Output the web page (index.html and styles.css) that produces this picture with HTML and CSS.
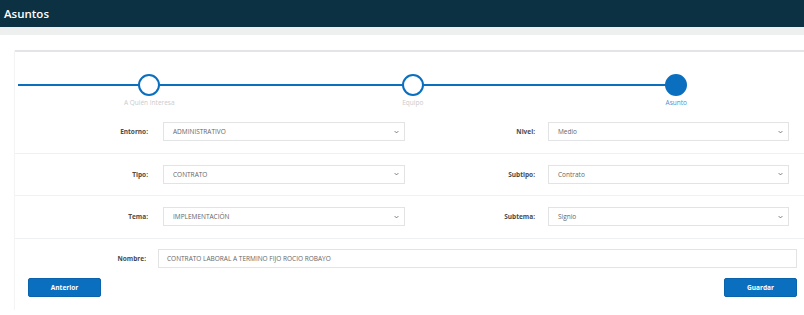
FILE: index.html
```html
<!DOCTYPE html>
<html lang="es">
<head>
<meta charset="utf-8">
<title>Asuntos</title>
<link rel="stylesheet" href="styles.css">
</head>
<body>
<header class="topbar">Asuntos</header>
<div class="strip"></div>
<main class="card">
  <div class="stepper">
    <div class="step-line"></div>
    <div class="step">
      <div class="dot"></div>
      <div class="step-label">A Quién Interesa</div>
    </div>
    <div class="step">
      <div class="dot"></div>
      <div class="step-label">Equipo</div>
    </div>
    <div class="step active">
      <div class="dot"></div>
      <div class="step-label">Asunto</div>
    </div>
  </div>

  <div class="row">
    <label class="lbl">Entorno:</label>
    <div class="select"><span>ADMINISTRATIVO</span><svg class="chev" viewBox="0 0 8 5"><path d="M1 1l3 3 3-3" fill="none" stroke="#555" stroke-width="1.2"/></svg></div>
    <label class="lbl">Nivel:</label>
    <div class="select"><span>Medio</span><svg class="chev" viewBox="0 0 8 5"><path d="M1 1l3 3 3-3" fill="none" stroke="#555" stroke-width="1.2"/></svg></div>
  </div>
  <div class="row">
    <label class="lbl">Tipo:</label>
    <div class="select"><span>CONTRATO</span><svg class="chev" viewBox="0 0 8 5"><path d="M1 1l3 3 3-3" fill="none" stroke="#555" stroke-width="1.2"/></svg></div>
    <label class="lbl">Subtipo:</label>
    <div class="select"><span>Contrato</span><svg class="chev" viewBox="0 0 8 5"><path d="M1 1l3 3 3-3" fill="none" stroke="#555" stroke-width="1.2"/></svg></div>
  </div>
  <div class="row">
    <label class="lbl">Tema:</label>
    <div class="select"><span>IMPLEMENTACIÓN</span><svg class="chev" viewBox="0 0 8 5"><path d="M1 1l3 3 3-3" fill="none" stroke="#555" stroke-width="1.2"/></svg></div>
    <label class="lbl">Subtema:</label>
    <div class="select"><span>Signio</span><svg class="chev" viewBox="0 0 8 5"><path d="M1 1l3 3 3-3" fill="none" stroke="#555" stroke-width="1.2"/></svg></div>
  </div>
  <div class="row-name">
    <label class="lbl">Nombre:</label>
    <div class="input">CONTRATO LABORAL A TERMINO FIJO ROCIO ROBAYO</div>
  </div>
  <div class="actions">
    <button class="btn">Anterior</button>
    <button class="btn">Guardar</button>
  </div>
</main>
</body>
</html>
```
FILE: styles.css
```css
* { box-sizing: border-box; }
body {
  margin: 0;
  font-family: "Open Sans", "Liberation Sans", sans-serif;
  background: #fff;
  width: 804px;
  overflow: hidden;
}
.topbar {
  height: 27px;
  background: #0b3143;
  color: #fff;
  font-size: 11.5px;
  font-weight: 600;
  line-height: 27px;
  padding-left: 4px;
}
.strip {
  height: 8px;
  background: #eef0f0;
}
.card {
  margin: 15px 0 0 15px;
  width: 789px;
  border-top: 2px solid #e2e4e7;
  box-shadow: 0 1px 2px rgba(0, 0, 0, 0.08), -1px 0 1px rgba(0, 0, 0, 0.02);
  padding-bottom: 13px;
}
.stepper {
  position: relative;
  display: grid;
  grid-template-columns: repeat(3, 263.5px);
  margin-left: 2.5px;
  padding-top: 22px;
  height: 59px;
}
.step-line {
  position: absolute;
  left: 0;
  top: 32px;
  width: 659px;
  height: 2px;
  background: #0b6fbf;
}
.step {
  position: relative;
  display: flex;
  flex-direction: column;
  align-items: center;
}
.dot {
  width: 22px;
  height: 22px;
  border-radius: 50%;
  border: 2px solid #0b6fbf;
  background: #fff;
}
.step.active .dot { background: #0b6fbf; }
.step-label {
  margin-top: 2px;
  font-size: 6.5px;
  color: #c9cbcd;
}
.step.active .step-label { color: #4d8fd0; }

.row {
  display: grid;
  grid-template-columns: 133px 242px 115px 241px;
  column-gap: 15px;
  align-items: center;
  padding: 11px 0 11.5px;
  border-bottom: 1px solid #f0f1f2;
}
.row .select:last-child { width: 241px; margin-left: -2px; }
.lbl {
  text-align: right;
  font-size: 6.5px;
  font-weight: 700;
  color: #4a4a4a;
}
.select, .input {
  height: 19px;
  border: 1px solid #e2e3e5;
  display: flex;
  align-items: center;
  justify-content: space-between;
  padding: 0 5px 0 9px;
  font-size: 6.5px;
  color: #666;
}
.chev { width: 5px; height: 4px; }
.row-name {
  display: grid;
  grid-template-columns: 131px 639px;
  column-gap: 12px;
  align-items: center;
  padding-top: 10px;
}
.input { padding-left: 8px; }
.actions {
  display: flex;
  justify-content: space-between;
  padding: 10px 7px 0 13px;
}
.btn {
  width: 73px;
  height: 19px;
  border: 1px solid #0a64ad;
  border-radius: 2px;
  background: #0b6fbf;
  color: #fff;
  font-family: inherit;
  font-size: 6.5px;
  font-weight: 700;
  padding: 0;
}
```
